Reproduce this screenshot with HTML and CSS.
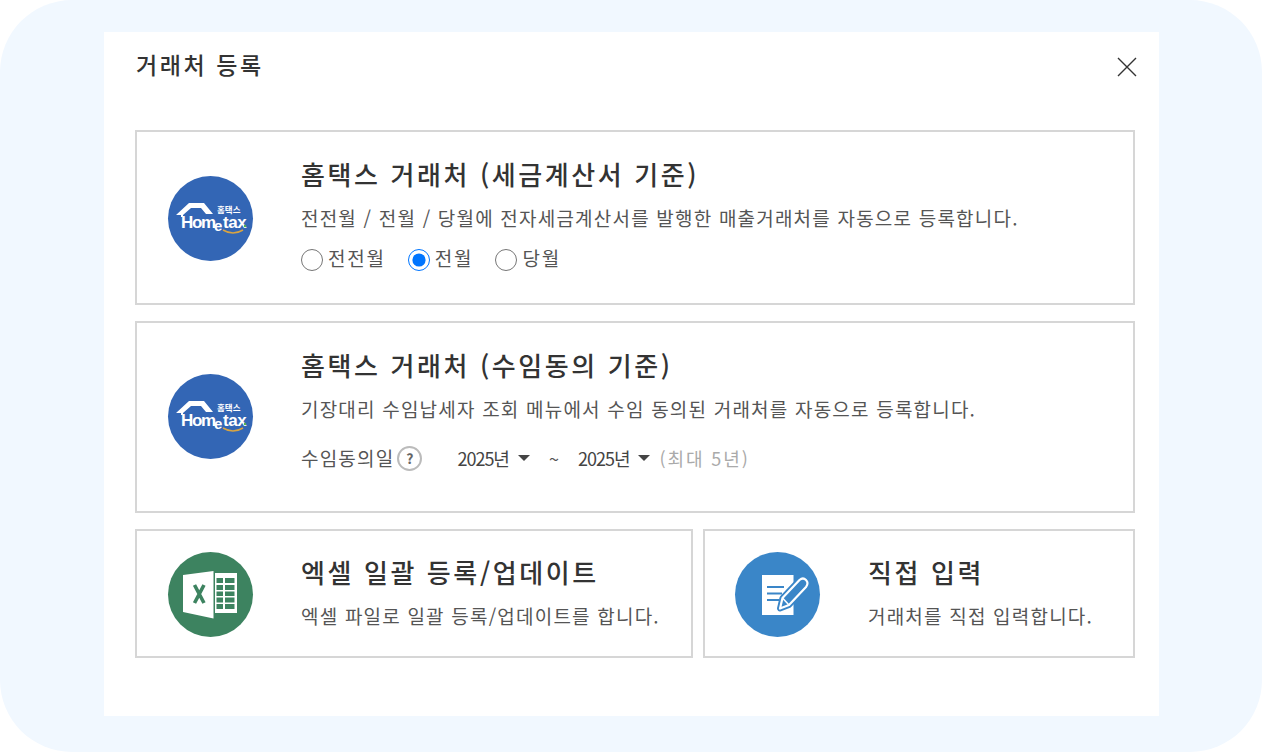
FILE: index.html
```html
<!DOCTYPE html>
<html lang="ko">
<head>
  <meta charset="UTF-8" />
  <meta name="viewport" content="width=device-width, initial-scale=1.0"/>
  <title>거래처 등록</title>
  <link rel="stylesheet" href="styles.css">
</head>
<body>
  <div class="frame">
    <div class="modal">

      <!-- Header -->
      <div class="modal-head">
        <h2>거래처 등록</h2>
        <button class="close" aria-label="닫기">
          <svg width="20" height="20" viewBox="0 0 20 20"><path d="M1 1 L19 19 M19 1 L1 19" stroke="#333" stroke-width="1.4" fill="none"/></svg>
        </button>
      </div>

      <!-- Hometax: tax invoice -->
      <div class="card card-tax">
        <div class="logo logo-blue">
          <svg width="85" height="85" viewBox="0 0 85 85">
            <path d="M8 39 L21 27 H36 L45 38 H38 L33 32 H23 L15 39 V41 H13 V39 Z" fill="#fff"/>
            <text x="49" y="37" class="logo-ko">홈택스</text>
            <text x="13" y="52" class="logo-en">Hom</text>
            <text x="46" y="55" class="logo-e">e</text>
            <text x="55" y="52" class="logo-tax">tax</text>
            <path d="M55 54 Q65 60 75 54" stroke="#d9a441" stroke-width="1.5" fill="none"/>
            <circle cx="77" cy="50" r="1.2" fill="#4caf50"/>
          </svg>
        </div>
        <div class="info">
          <h3>홈택스 거래처 (세금계산서 기준)</h3>
          <p>전전월 / 전월 / 당월에 전자세금계산서를 발행한 매출거래처를 자동으로 등록합니다.</p>
          <div class="radios">
            <label><input type="radio" name="month">전전월</label>
            <label><input type="radio" name="month" checked>전월</label>
            <label><input type="radio" name="month">당월</label>
          </div>
        </div>
      </div>

      <!-- Hometax: agency consent -->
      <div class="card card-agree">
        <div class="logo logo-blue">
          <svg width="85" height="85" viewBox="0 0 85 85">
            <path d="M8 39 L21 27 H36 L45 38 H38 L33 32 H23 L15 39 V41 H13 V39 Z" fill="#fff"/>
            <text x="49" y="37" class="logo-ko">홈택스</text>
            <text x="13" y="52" class="logo-en">Hom</text>
            <text x="46" y="55" class="logo-e">e</text>
            <text x="55" y="52" class="logo-tax">tax</text>
            <path d="M55 54 Q65 60 75 54" stroke="#d9a441" stroke-width="1.5" fill="none"/>
            <circle cx="77" cy="50" r="1.2" fill="#4caf50"/>
          </svg>
        </div>
        <div class="info">
          <h3>홈택스 거래처 (수임동의 기준)</h3>
          <p>기장대리 수임납세자 조회 메뉴에서 수임 동의된 거래처를 자동으로 등록합니다.</p>
          <div class="agree-row">
            <span>수임동의일</span>
            <span class="help">?</span>
            <span class="year year-first">2025년</span>
            <span class="tilde">~</span>
            <span class="year">2025년</span>
            <span class="limit">(최대 5년)</span>
          </div>
        </div>
      </div>

      <div class="card-row">
        <!-- Excel -->
        <div class="card card-excel">
          <div class="logo logo-green">
            <svg width="85" height="85" viewBox="0 0 85 85">
              <path d="M15 23 L45.500 19 V66.500 L15 60 Z" fill="#fff"/>
              <path d="M26.500 33 L36 51 M36 33 L26.500 51" stroke="#3d8360" stroke-width="3.600" fill="none"/>
              <path d="M47 21 H69 V61 H47 Z" fill="#fff"/>
              <path d="M48.500 26 H55 V31 H48.500 Z M57 26 H66.500 V31 H57 Z M48.500 33 H55 V38 H48.500 Z M57 33 H66.500 V38 H57 Z M48.500 39.500 H55 V44 H48.500 Z M57 39.500 H66.500 V44 H57 Z M48.500 45.500 H55 V50.500 H48.500 Z M57 45.500 H66.500 V50.500 H57 Z M48.500 52 H55 V57 H48.500 Z M57 52 H66.500 V57 H57 Z" fill="#3d8360"/>
            </svg>
          </div>
          <div class="info">
            <h3>엑셀 일괄 등록/업데이트</h3>
            <p>엑셀 파일로 일괄 등록/업데이트를 합니다.</p>
          </div>
        </div>

        <!-- Manual input -->
        <div class="card card-manual">
          <div class="logo logo-sky">
            <svg width="85" height="85" viewBox="0 0 85 85">
              <path d="M27 23 H58.500 V63 H27 Z" fill="#fff"/>
              <path d="M32 35 H49 M32 41.500 H47 M32 48 H44" stroke="#3a86c8" stroke-width="1.800" fill="none"/>
              <path d="M45 56.500 L47.500 46 L64.500 28 Q68 25 71 28 Q74 31 71 35 L54 53 Z" fill="#3a86c8" stroke="#3a86c8" stroke-width="6" stroke-linejoin="round"/>
              <path d="M45 56.500 L47.500 46 L64.500 28 Q68 25 71 28 Q74 31 71 35 L54 53 Z" fill="#3a86c8" stroke="#fff" stroke-width="2.200" stroke-linejoin="round"/>
              <path d="M47.500 46 L54 53" stroke="#fff" stroke-width="1.500" fill="none"/>
            </svg>
          </div>
          <div class="info">
            <h3>직접 입력</h3>
            <p>거래처를 직접 입력합니다.</p>
          </div>
        </div>
      </div>

    </div>
  </div>
</body>
</html>
```

FILE: styles.css
```css
* {
  box-sizing: border-box;
  margin: 0;
  padding: 0;
}

body {
  font-family: "Noto Sans CJK KR", "Noto Sans", sans-serif;
  background: #fff;
  color: #333;
  width: 1262px;
  height: 752px;
  overflow: hidden;
}

.frame {
  width: 1262px;
  height: 752px;
  background: #f1f8ff;
  border-radius: 72px;
  padding: 32px 103px 36px 104px;
}

.modal {
  height: 684px;
  background: #fff;
  padding: 0 24px 0 31px;
}

/* Header */
.modal-head {
  height: 98px;
  display: flex;
  justify-content: space-between;
  padding: 14px 0 0 1px;
}

.modal-head h2 {
  font-size: 23px;
  font-weight: 500;
  line-height: 36px;
  letter-spacing: 2.600px;
  color: #333;
}

.close {
  width: 20px;
  height: 20px;
  margin: 11px -2px 0 0;
  border: none;
  background: none;
}

/* Cards */
.card {
  display: flex;
  border: 2px solid #d6d6d6;
  background: #fff;
}

.card-tax {
  height: 175px;
  margin-bottom: 16px;
}

.card-agree {
  height: 192px;
  margin-bottom: 16px;
}

.card-row {
  display: flex;
  gap: 10px;
}

.card-excel {
  width: 558px;
  height: 129px;
}

.card-manual {
  width: 432px;
  height: 129px;
}

.logo {
  flex: none;
  width: 85px;
  height: 85px;
  border-radius: 50%;
  margin: 44px 48px 0 31px;
}

.card-agree .logo {
  margin-top: 51px;
}

.card-excel .logo {
  margin-top: 21px;
}

.card-manual .logo {
  margin: 21px 48px 0 30px;
}

.logo-blue {
  background: #3366b5;
}

.logo-green {
  background: #3d8360;
}

.logo-sky {
  background: #3a86c8;
}

.logo-ko {
  font-size: 8.500px;
  font-weight: 700;
  fill: #fff;
}

.logo-en,
.logo-e,
.logo-tax {
  font-family: "Liberation Sans", sans-serif;
  font-size: 17px;
  font-weight: 700;
  fill: #fff;
}

.logo-en {
  letter-spacing: -1.300px;
}

.logo-e {
  font-size: 15px;
}

.logo-tax {
  letter-spacing: -0.400px;
}

.info {
  padding-top: 23px;
}

.card-excel .info,
.card-manual .info {
  padding-top: 22px;
}

.info h3 {
  font-size: 26px;
  font-weight: 500;
  line-height: 38px;
  letter-spacing: 2.600px;
  color: #333;
}

.info p {
  margin-top: 11px;
  font-size: 19px;
  line-height: 28px;
  letter-spacing: 1.200px;
  color: #555;
}

/* Radio row */
.radios {
  display: flex;
  margin-top: 13px;
  font-size: 19px;
  line-height: 26px;
  letter-spacing: 1.800px;
  color: #555;
}

.radios label {
  display: flex;
  align-items: center;
  margin-right: 22px;
}

.radios input {
  width: 22px;
  height: 22px;
  margin: 4px 5px 0 0;
}

/* Consent date row */
.agree-row {
  display: flex;
  align-items: center;
  margin-top: 21px;
  font-size: 19px;
  line-height: 28px;
  letter-spacing: 1.200px;
  color: #555;
}

.help {
  width: 25px;
  height: 25px;
  margin-left: 3px;
  border: 2px solid #bbb;
  border-radius: 50%;
  font-size: 14px;
  font-weight: 700;
  line-height: 21px;
  letter-spacing: 0;
  text-align: center;
  color: #666;
}

.year {
  display: flex;
  align-items: center;
  font-size: 18px;
  letter-spacing: -1px;
  color: #444;
}

.year::after {
  content: "";
  margin-left: 9px;
  border-top: 6px solid #444;
  border-left: 6px solid transparent;
  border-right: 6px solid transparent;
}

.year-first {
  margin-left: 35px;
}

.tilde {
  margin: 0 19px 0 19px;
  font-size: 18px;
  letter-spacing: 0;
}

.limit {
  margin-left: 9px;
  font-size: 18px;
  letter-spacing: 1.900px;
  color: #aaa;
}
```
